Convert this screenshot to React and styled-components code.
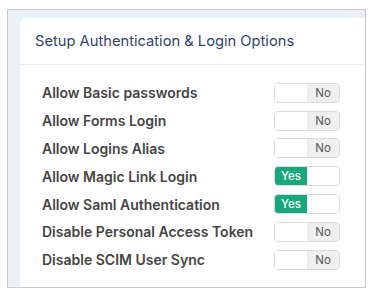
import React from "react";
import styled, { createGlobalStyle } from "styled-components";

const GlobalStyle = createGlobalStyle`
  html, body {
    margin: 0;
    padding: 0;
    background: #fff;
  }
  body {
    font-family: Inter, "Noto Sans", sans-serif;
  }
`;

const Page = styled.div`
  padding: 9px 0 0 7px;
`;

const Frame = styled.div`
  width: 359px;
  height: 279px;
  box-sizing: border-box;
  border: 1px solid #c9c9c9;
  background: #e9f0f8;
  padding: 8px 0 0 12px;
  display: flex;
  overflow: hidden;
`;

const Card = styled.section`
  flex: 1;
  background: #fff;
  border-radius: 6px 0 0 0;
  display: flex;
  flex-direction: column;
`;

const Header = styled.h2`
  margin: 0;
  height: 45px;
  display: flex;
  align-items: center;
  padding: 0 0 1px 15px;
  border-bottom: 1px solid #ececec;
  font-size: 14.7px;
  font-weight: 400;
  color: #34456a;
`;

const Body = styled.div`
  padding: 14px 25px 0 22px;
  display: flex;
  flex-direction: column;
`;

const Row = styled.div`
  height: 27.8px;
  display: flex;
  align-items: center;
  justify-content: space-between;
`;

const Label = styled.span`
  font-size: 14px;
  font-weight: 600;
  color: #454545;
`;

const Toggle = styled.div`
  width: 66px;
  height: 20px;
  box-sizing: border-box;
  border: 1px solid #dadada;
  border-radius: 4px;
  display: flex;
  overflow: hidden;
`;

const Half = styled.span`
  flex: 1;
  display: flex;
  align-items: center;
  justify-content: center;
  font-size: 11.5px;
  font-weight: ${(p) => (p.$on ? 500 : 400)};
  background: ${(p) => (p.$on ? "#18a87c" : p.$off ? "#efefef" : "#fff")};
  color: ${(p) => (p.$on ? "#fff" : "#555")};
`;

const options = [
  ["Allow Basic passwords", false],
  ["Allow Forms Login", false],
  ["Allow Logins Alias", false],
  ["Allow Magic Link Login", true],
  ["Allow Saml Authentication", true],
  ["Disable Personal Access Token", false],
  ["Disable SCIM User Sync", false],
];

export default function App() {
  return (
    <Page>
      <GlobalStyle />
      <Frame>
        <Card>
          <Header>Setup Authentication &amp; Login Options</Header>
          <Body>
            {options.map(([label, on]) => (
              <Row key={label}>
                <Label>{label}</Label>
                <Toggle>
                  {on ? (
                    <>
                      <Half $on>Yes</Half>
                      <Half />
                    </>
                  ) : (
                    <>
                      <Half />
                      <Half $off>No</Half>
                    </>
                  )}
                </Toggle>
              </Row>
            ))}
          </Body>
        </Card>
      </Frame>
    </Page>
  );
}
